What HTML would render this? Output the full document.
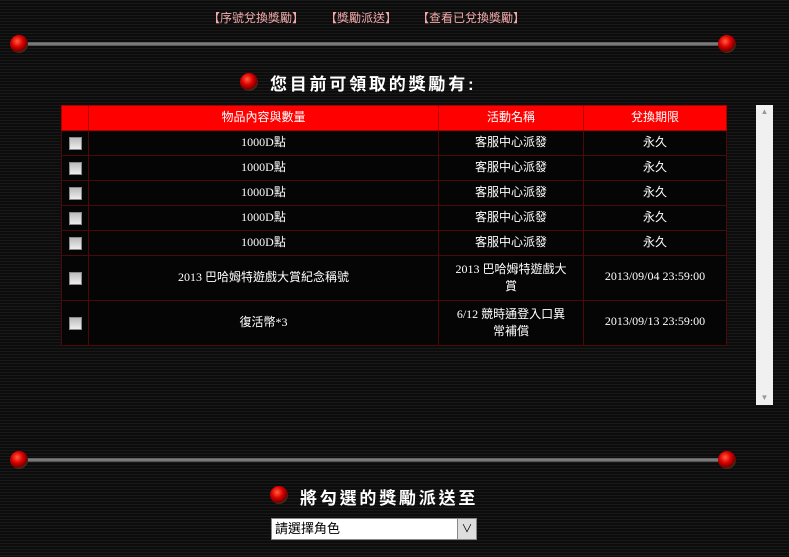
<!DOCTYPE html>
<html><head><meta charset="utf-8"><style>
body{margin:0;width:789px;height:557px;overflow:hidden;background:#121212;background-image:repeating-linear-gradient(#191919 0 1px,#0c0c0c 1px 3px);font-family:"Liberation Serif","Noto Sans CJK TC",serif;position:relative;color:#fff}
.a{position:absolute}
.nav{top:9px;font-size:12px;color:#f3a9a9;font-family:"Liberation Sans","Noto Sans CJK TC",sans-serif}
.line{height:4px;background:linear-gradient(#555,#888,#444);left:20px;width:708px}
.dot{width:18px;height:18px;border-radius:50%;background:radial-gradient(circle at 40% 35%,#ff6040,#d00 35%,#700 62%,#3a3020 72%,#111 95%);}
.t{font-size:17px;font-weight:bold;letter-spacing:2.8px;font-family:"Liberation Sans","Noto Sans CJK TC",sans-serif}
table{position:absolute;left:61px;top:105px;border-collapse:collapse;width:666px;font-size:12px}
td,th{border:1px solid #4a0a0a;text-align:center;padding:0 0 3px 0;background:#050505;color:#fff;font-weight:normal}
th{background:#ff0000;border-color:#a00;height:21px;font-family:"Liberation Sans","Noto Sans CJK TC",sans-serif}
td{height:21px}
td:first-child{padding:0}
.cb{display:inline-block;width:11px;height:11px;background:linear-gradient(#bbb,#eee);border:1px solid #888;vertical-align:middle}
</style></head><body>
<div class="a nav" style="left:208px">【序號兌換獎勵】</div>
<div class="a nav" style="left:325px">【獎勵派送】</div>
<div class="a nav" style="left:417px">【查看已兌換獎勵】</div>
<div class="a line" style="top:42px"></div>
<div class="a dot" style="left:10px;top:35px"></div>
<div class="a dot" style="left:718px;top:35px"></div>
<div class="a dot" style="left:240px;top:73px"></div>
<div class="a t" style="left:270px;top:70px">您目前可領取的獎勵有:</div>
<table>
<tr><th style="width:26px"></th><th style="width:349px">物品內容與數量</th><th style="width:144px">活動名稱</th><th>兌換期限</th></tr>
<tr><td><span class="cb"></span></td><td>1000D點</td><td>客服中心派發</td><td>永久</td></tr>
<tr><td><span class="cb"></span></td><td>1000D點</td><td>客服中心派發</td><td>永久</td></tr>
<tr><td><span class="cb"></span></td><td>1000D點</td><td>客服中心派發</td><td>永久</td></tr>
<tr><td><span class="cb"></span></td><td>1000D點</td><td>客服中心派發</td><td>永久</td></tr>
<tr><td><span class="cb"></span></td><td>1000D點</td><td>客服中心派發</td><td>永久</td></tr>
<tr><td style="height:44px"><span class="cb"></span></td><td>2013 巴哈姆特遊戲大賞紀念稱號</td><td>2013 巴哈姆特遊戲大<br>賞</td><td>2013/09/04 23:59:00</td></tr>
<tr><td style="height:44px"><span class="cb"></span></td><td>復活幣*3</td><td>6/12 競時通登入口異<br>常補償</td><td>2013/09/13 23:59:00</td></tr>
</table>
<div class="a" style="left:756px;top:105px;width:17px;height:300px;background:#f0f0f0;color:#999;font-size:8px;text-align:center;line-height:14px">▲<div style="position:absolute;bottom:0;width:17px">▼</div></div>
<div class="a line" style="top:458px"></div>
<div class="a dot" style="left:10px;top:451px"></div>
<div class="a dot" style="left:718px;top:451px"></div>
<div class="a dot" style="left:270px;top:486px"></div>
<div class="a t" style="left:300px;top:484px">將勾選的獎勵派送至</div>
<div class="a" style="left:271px;top:518px;width:206px;height:22px;background:#fff;border:1px solid #888;box-sizing:border-box;color:#000;font-size:13px;line-height:20px;padding-left:3px;font-family:'Liberation Sans','Noto Sans CJK TC',sans-serif">請選擇角色<div style="position:absolute;right:0;top:0;width:18px;height:20px;background:#ddd;border-left:1px solid #888;text-align:center;font-size:11px">∨</div></div>
</body></html>
